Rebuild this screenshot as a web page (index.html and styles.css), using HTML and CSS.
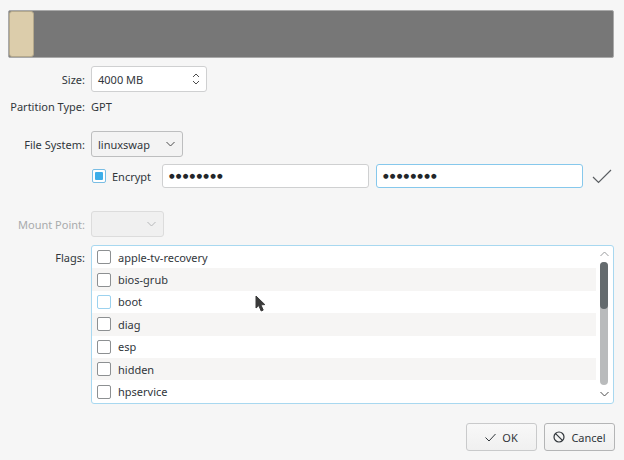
FILE: index.html
```html
<!DOCTYPE html>
<html>
<head>
<meta charset="utf-8">
<link rel="stylesheet" href="styles.css">
</head>
<body>
<div class="bar"><div class="seg"></div></div>

<div class="row r-size">
  <div class="lbl">Size:</div>
  <div class="spin">
    <span>4000 MB</span>
    <svg class="updown" width="8" height="14" viewBox="0 0 8 14"><path d="M1 5 L4 2 L7 5 M1 9 L4 12 L7 9" fill="none" stroke="#4d4d4d" stroke-width="1"/></svg>
  </div>
</div>

<div class="row r-type">
  <div class="lbl">Partition Type:</div>
  <div class="val">GPT</div>
</div>

<div class="row r-fs">
  <div class="lbl">File System:</div>
  <div class="combo">
    <span>linuxswap</span>
    <svg width="9" height="6" viewBox="0 0 9 6"><path d="M0.5 1 L4.5 5 L8.5 1" fill="none" stroke="#4d4d4d" stroke-width="1"/></svg>
  </div>
</div>

<div class="row r-enc">
  <div class="lbl"></div>
  <div class="encbox"><div class="encfill"></div></div>
  <div class="enctext">Encrypt</div>
  <div class="pw">&#9679;&#9679;&#9679;&#9679;&#9679;&#9679;&#9679;&#9679;</div>
  <div class="pw pw-focus">&#9679;&#9679;&#9679;&#9679;&#9679;&#9679;&#9679;&#9679;</div>
  <svg class="okmark" width="20" height="15" viewBox="0 0 20 15"><path d="M1 8 L6.5 13.5 L19 1" fill="none" stroke="#5a5e62" stroke-width="1.2"/></svg>
</div>

<div class="row r-mount">
  <div class="lbl dis">Mount Point:</div>
  <div class="combo combo-dis">
    <span></span>
    <svg width="9" height="6" viewBox="0 0 9 6"><path d="M0.5 1 L4.5 5 L8.5 1" fill="none" stroke="#b5b7b9" stroke-width="1"/></svg>
  </div>
</div>

<div class="row r-flags">
  <div class="lbl flbl">Flags:</div>
  <div class="list">
    <div class="items">
      <div class="item"><span class="cb"></span>apple-tv-recovery</div>
      <div class="item alt"><span class="cb"></span>bios-grub</div>
      <div class="item"><span class="cb cb-hover"></span>boot</div>
      <div class="item alt"><span class="cb"></span>diag</div>
      <div class="item"><span class="cb"></span>esp</div>
      <div class="item alt"><span class="cb"></span>hidden</div>
      <div class="item"><span class="cb"></span>hpservice</div>
    </div>
    <div class="sb">
      <svg width="9" height="6" viewBox="0 0 9 6"><path d="M0.5 5 L4.5 1 L8.5 5" fill="none" stroke="#9a9c9e" stroke-width="1"/></svg>
      <div class="track"><div class="handle"></div></div>
      <svg width="9" height="6" viewBox="0 0 9 6"><path d="M0.5 1 L4.5 5 L8.5 1" fill="none" stroke="#4d4d4d" stroke-width="1"/></svg>
    </div>
  </div>
</div>

<div class="buttons">
  <div class="btn btn-ok">
    <svg width="11" height="9" viewBox="0 0 11 9"><path d="M0.5 4.5 L4 8 L10.5 1" fill="none" stroke="#31363b" stroke-width="1"/></svg>
    <span>OK</span>
  </div>
  <div class="btn btn-cancel">
    <svg width="12" height="12" viewBox="0 0 12 12"><circle cx="6" cy="6" r="5" fill="none" stroke="#31363b" stroke-width="1.2"/><path d="M2.6 2.6 L9.4 9.4" stroke="#31363b" stroke-width="1.2"/></svg>
    <span>Cancel</span>
  </div>
</div>

<svg class="cursor" width="12" height="19" viewBox="0 0 12 19"><path d="M1 1 L1 13 L3.8 10.6 L6.2 16 L8.2 15.1 L5.9 9.8 L9.8 9.6 Z" fill="#3a3a3a" stroke="#3a3a3a" stroke-width="1" stroke-linejoin="round"/></svg>
</body>
</html>
```

FILE: styles.css
```css
html, body {
  margin: 0;
  padding: 0;
}
body {
  background: #f6f6f6;
  font-family: "Noto Sans", "DejaVu Sans", sans-serif;
  font-size: 11px;
  color: #31363b;
  width: 624px;
  height: 460px;
  position: relative;
  overflow: hidden;
}
.bar {
  margin: 10px 10px 0 8px;
  height: 46px;
  background: #777777;
  border: 1px solid #a9a9a9;
  border-radius: 2px;
  display: flex;
}
.seg {
  width: 23px;
  background: #dccdab;
  border: 1px solid #b5a98c;
  border-radius: 3px;
}
.row {
  display: flex;
  align-items: center;
}
.lbl {
  width: 85px;
  flex: none;
  text-align: right;
  margin-right: 6px;
}
.lbl.dis {
  color: #a8aaac;
}
.r-size { margin-top: 8px; height: 26px; }
.r-type { margin-top: 4px; height: 20px; }
.r-fs { margin-top: 15px; height: 26px; }
.r-enc { margin-top: 7px; height: 24px; }
.r-mount { margin-top: 23px; height: 26px; }
.r-flags { margin-top: 8px; height: 159px; align-items: flex-start; }

.spin {
  box-sizing: border-box;
  width: 116px;
  height: 26px;
  background: #fff;
  border: 1px solid #cfd0d1;
  border-radius: 3px;
  display: flex;
  align-items: center;
  justify-content: space-between;
  padding: 0 6px 0 6px;
}
.combo {
  box-sizing: border-box;
  width: 92px;
  height: 26px;
  background: #f3f3f3;
  border: 1px solid #bdbebf;
  border-radius: 3px;
  display: flex;
  align-items: center;
  justify-content: space-between;
  padding: 0 7px 0 6px;
}
.combo-dis {
  width: 73px;
  background: #f0f0f0;
  border-color: #dcdcdc;
}
.encbox {
  box-sizing: border-box;
  width: 14px;
  height: 14px;
  margin-left: 1px;
  border: 1px solid #79bde4;
  border-radius: 2px;
  padding: 2px;
  background: #fff;
}
.encfill {
  width: 100%;
  height: 100%;
  background: #3daee9;
  border-radius: 1px;
}
.enctext {
  margin-left: 6px;
  width: 50px;
}
.pw {
  box-sizing: border-box;
  width: 207px;
  height: 24px;
  background: #fff;
  border: 1px solid #cfd0d1;
  border-radius: 3px;
  display: flex;
  align-items: center;
  padding-left: 6px;
  font-family: "DejaVu Sans", sans-serif;
  font-size: 6.5px;
  letter-spacing: 1.2px;
  color: #232629;
}
.pw-focus {
  margin-left: 7px;
  border-color: #86c8ec;
}
.okmark {
  margin-left: 9px;
}
.flbl {
  padding-top: 5px;
}
.list {
  box-sizing: border-box;
  width: 523px;
  height: 159px;
  background: #fff;
  border: 1px solid #a8d8f0;
  border-radius: 3px;
  display: flex;
}
.items {
  width: 504px;
  display: flex;
  flex-direction: column;
}
.item {
  height: 22.4px;
  display: flex;
  align-items: center;
  padding-left: 5px;
  color: #31363b;
}
.item.alt {
  background: #f6f5f4;
}
.cb {
  box-sizing: border-box;
  width: 14px;
  height: 14px;
  border: 1px solid #8d9092;
  border-radius: 2px;
  background: #fff;
  margin-right: 7px;
}
.cb-hover {
  border-color: #9cd2ef;
}
.sb {
  width: 17px;
  display: flex;
  flex-direction: column;
  align-items: center;
  padding-top: 5px;
}
.track {
  margin-top: 5px;
  width: 8px;
  height: 123px;
  background: #b9bbbc;
  border-radius: 4px;
  margin-bottom: 6px;
  margin-left: -1px;
}
.handle {
  height: 47px;
  background: #646b6e;
  border-radius: 4px;
}
.buttons {
  margin-top: 19px;
  display: flex;
  justify-content: flex-end;
  gap: 7px;
  padding-right: 9px;
}
.btn {
  box-sizing: border-box;
  height: 28px;
  border: 1px solid #c9cacb;
  border-radius: 3px;
  background: linear-gradient(#f8f8f8, #f0f0f0);
  display: flex;
  align-items: center;
  justify-content: center;
  gap: 6px;
}
.btn-ok { width: 71px; }
.btn-cancel { width: 71px; border-color: #b4b5b6; }
.cursor {
  position: absolute;
  left: 255px;
  top: 295px;
}
```
